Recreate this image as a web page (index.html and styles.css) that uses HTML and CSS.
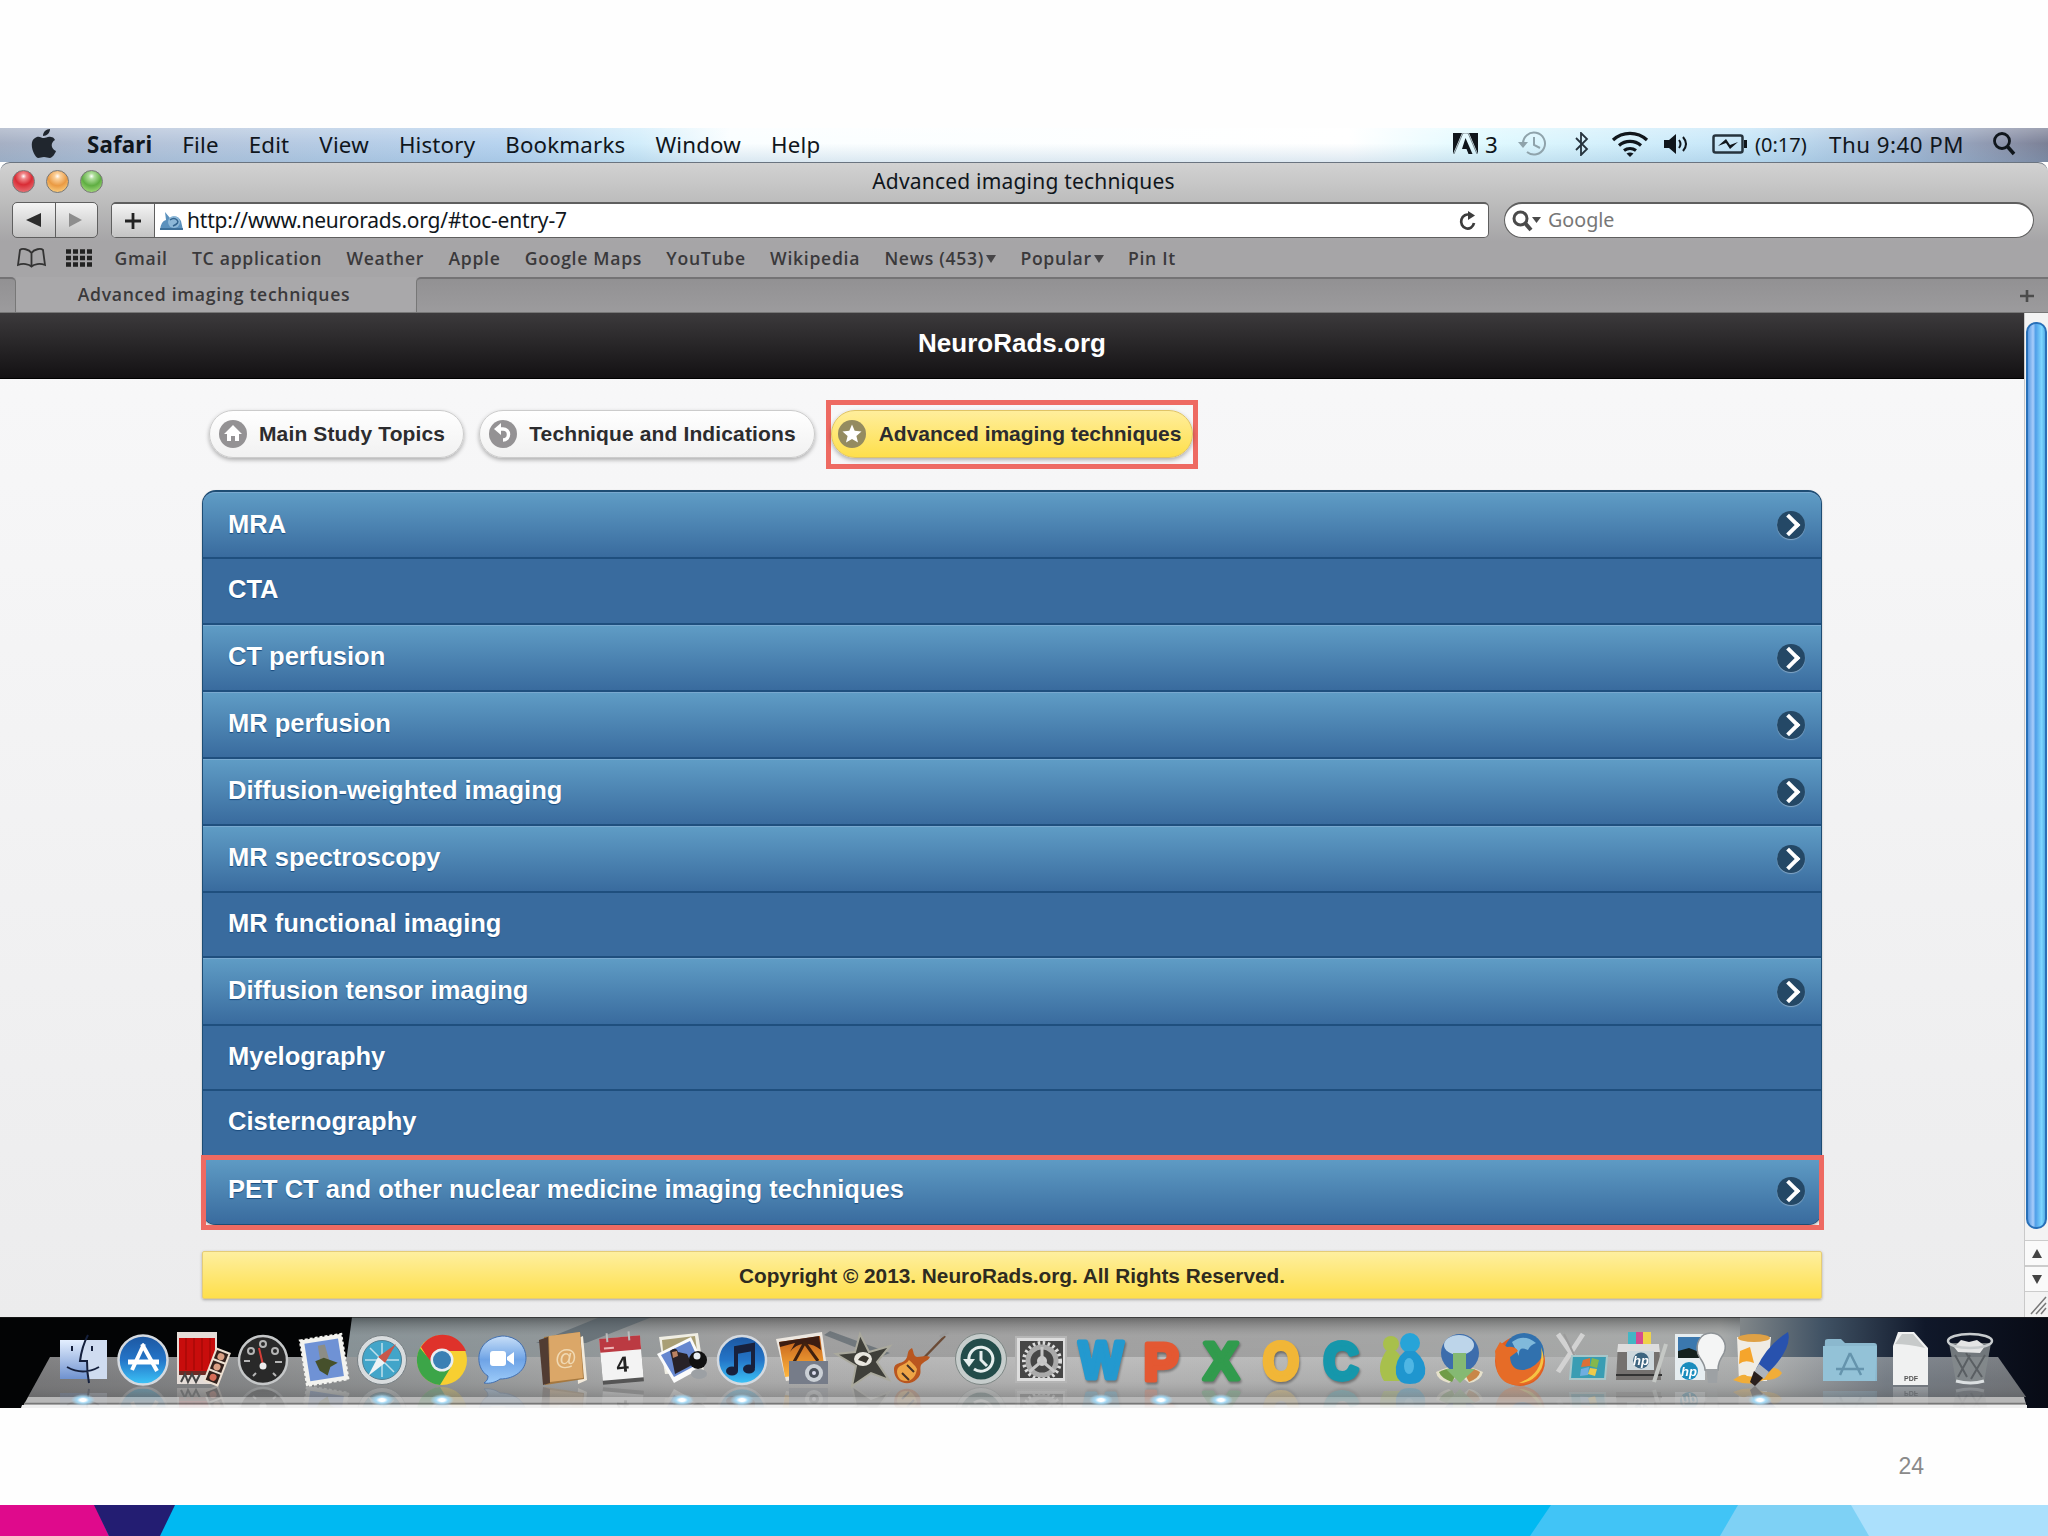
FILE: index.html
```html
<!DOCTYPE html>
<html lang="en">
<head>
<meta charset="utf-8">
<title>Advanced imaging techniques</title>
<link rel="stylesheet" href="styles.css">
</head>
<body>
<div class="slide">

<div class="desktop">
  <!-- Menu bar -->
  <div class="menubar">
    <svg class="apple" width="26" height="30" viewBox="0 0 26 30"><path d="M13 9c2 0 4-2 7-1 2 0 3 1 4 3-5 3-4 9 1 11-1 3-4 7-6 7-3 0-3-1-6-1s-3 1-6 1C3 28-3 13 4 9c4-3 6 0 9 0zM12 7c0-4 3-7 7-7 0 4-3 7-7 7z" fill="#20262e"/></svg>
    <div class="menus">
      <b>Safari</b><span>File</span><span>Edit</span><span>View</span><span>History</span><span>Bookmarks</span><span>Window</span><span>Help</span>
    </div>
    <div class="status">
      <svg width="26" height="22" viewBox="0 0 26 22"><path d="M0 0h9L0 21zM16 0h9v21zM12.500 5l7 16h-4l-2-5H9z" fill="#10161c"/><path d="M1 21L10 0h5l9 21" fill="none" stroke="#10161c" stroke-width=".5"/></svg>
      <span class="s-three">3</span>
      <svg class="s-tm" width="30" height="26" viewBox="0 0 30 26"><path d="M5 13a11 11 0 1 1 4 8M16 6v8l6 3" fill="none" stroke="#8fa3ab" stroke-width="2"/><path d="M0 11h10l-5 6z" fill="#8fa3ab"/></svg>
      <svg class="s-bt" width="14" height="24" viewBox="0 0 14 24"><path d="M1 6l11 11-6 6V1l6 6L1 18" fill="none" stroke="#26333d" stroke-width="1.800"/></svg>
      <svg class="s-wifi" width="38" height="26" viewBox="0 0 38 26"><g fill="none" stroke="#10161c" stroke-width="3.200"><path d="M2 9a25 25 0 0 1 34 0M8 14.500a17 17 0 0 1 22 0M13 19.500a10 10 0 0 1 12 0"/></g><path d="M15.500 22.500q3.500-2 7 0L19 26z" fill="#10161c"/></svg>
      <svg class="s-vol" width="25" height="20" viewBox="0 0 25 20"><path d="M0 6h5l7-6v20l-7-6H0z" fill="#10161c"/><path d="M15 6q3 4 0 8M19 3q6 7 0 14" fill="none" stroke="#10161c" stroke-width="2"/></svg>
      <svg class="s-bat" width="36" height="20" viewBox="0 0 36 20"><rect x="1.500" y="1.500" width="29" height="17" rx="2" fill="none" stroke="#26333d" stroke-width="2.500"/><path d="M32 6h3v8h-3zM6 12l8-7 4 6 8-3-8 7-4-6z" fill="#10161c"/></svg>
      <span class="s-left">(0:17)</span>
      <span class="s-clock">Thu 9:40 PM</span>
      <svg class="s-find" width="24" height="24" viewBox="0 0 24 24"><circle cx="10" cy="9" r="7.500" fill="none" stroke="#10161c" stroke-width="2.800"/><path d="M15 14l7 8" stroke="#10161c" stroke-width="3.500"/></svg>
    </div>
  </div>

  <!-- Safari window -->
  <div class="window">
    <div class="titlebar">
      <div class="lights"><i class="light red"></i><i class="light amber"></i><i class="light green"></i></div>
      <div class="title">Advanced imaging techniques</div>
    </div>
    <div class="toolbar">
      <div class="navbtns">
        <div><svg width="16" height="14" viewBox="0 0 16 14"><path d="M15 0v14L0 7z" fill="#2c2c2c"/></svg></div>
        <div><svg width="14" height="14" viewBox="0 0 14 14"><path d="M0 0v14l13-7z" fill="#8d8d8d"/></svg></div>
      </div>
      <div class="address">
        <div class="plus"><svg width="18" height="18" viewBox="0 0 18 18"><path d="M9 1v16M1 9h16" stroke="#222" stroke-width="2.800"/></svg></div>
        <svg class="favicon" width="25" height="20" viewBox="0 0 25 20"><path d="M1 19q1-9 6-10L6 1l5 6q7-4 11 3l2 9z" fill="#5b91bd"/><circle cx="15" cy="11" r="6" fill="#8db8d8"/><path d="M11 9q4-3 7 0t-4 6M1 18h23" fill="none" stroke="#34658f" stroke-width="1.500"/></svg>
        <span class="url">http://www.neurorads.org/#toc-entry-7</span>
        <svg class="reload" width="18" height="20" viewBox="0 0 18 20"><path d="M15 12a6.500 7 0 1 1-4-8" fill="none" stroke="#3c3c3c" stroke-width="2.700"/><path d="M9 0l7 4.500L9 9z" fill="#3c3c3c"/></svg>
      </div>
      <div class="search">
        <svg width="30" height="22" viewBox="0 0 30 22"><circle cx="8.500" cy="8.500" r="6.500" fill="none" stroke="#4a4a4a" stroke-width="3"/><path d="M13 13l6 7" stroke="#4a4a4a" stroke-width="4"/><path d="M20 7h9l-4.500 6z" fill="#4a4a4a"/></svg>
        <span>Google</span>
      </div>
    </div>
    <div class="bookmarks">
      <svg width="29" height="20" viewBox="0 0 29 20"><path d="M14.500 18V5C12 1 5 0 3 2L1 17c5-2 11-1 13.500 1.500C17 16 23 15 28 17L26 2c-2-2-9-1-11.500 3" fill="none" stroke="#333" stroke-width="1.800"/></svg>
      <svg class="grid-icon" width="26" height="18" viewBox="0 0 26 18"><path d="M0 2.500h26M0 9h26M0 15.500h26" stroke="#222" stroke-width="4.500" stroke-dasharray="5 2"/></svg>
      <span>Gmail</span><span>TC application</span><span>Weather</span><span>Apple</span><span>Google Maps</span><span>YouTube</span><span>Wikipedia</span><span>News (453)<i class="caret"></i></span><span>Popular<i class="caret"></i></span><span>Pin It</span>
    </div>
    <div class="tabbar">
      <div class="tab-edge"></div>
      <div class="tab">Advanced imaging techniques</div>
      <div class="tab-rest"><svg width="14" height="12" viewBox="0 0 14 12"><path d="M7 0v12M0 6h14" stroke="#4c4c4c" stroke-width="2.600"/></svg></div>
    </div>

    <div class="viewport">
      <div class="page">
        <div class="header">NeuroRads.org</div>
        <div class="content">
          <div class="crumbs">
            <div class="pill"><svg width="30" height="30" viewBox="0 0 30 30"><circle cx="15" cy="15" r="14" fill="#949294"/><path d="M15 6l9 9h-3v7h-4v-5h-4v5H9v-7H6z" fill="#fff"/></svg>Main Study Topics</div>
            <div class="pill"><svg width="30" height="30" viewBox="0 0 30 30"><circle cx="15" cy="15" r="14" fill="#949294"/><path d="M12 10h3a5 5 0 0 1 0 11" fill="none" stroke="#fff" stroke-width="3.500"/><path d="M13 4v12l-7-6z" fill="#fff"/></svg>Technique and Indications</div>
            <div class="marked"><div class="pill current"><svg width="30" height="30" viewBox="0 0 30 30"><circle cx="15" cy="15" r="14" fill="#948b60"/><path d="M15 5.500l2.700 6.300 6.800.600-5.100 4.500 1.600 6.700-6-3.600-6 3.600 1.600-6.700-5.100-4.500 6.800-.600z" fill="#fff"/></svg>Advanced imaging techniques</div></div>
          </div>

          <ul class="topics">
            <li class="link">MRA<i class="arrow"></i></li>
            <li>CTA</li>
            <li class="link">CT perfusion<i class="arrow"></i></li>
            <li class="link">MR perfusion<i class="arrow"></i></li>
            <li class="link">Diffusion-weighted imaging<i class="arrow"></i></li>
            <li class="link">MR spectroscopy<i class="arrow"></i></li>
            <li>MR functional imaging</li>
            <li class="link">Diffusion tensor imaging<i class="arrow"></i></li>
            <li>Myelography</li>
            <li>Cisternography</li>
            <li class="link boxed">PET CT and other nuclear medicine imaging techniques<i class="arrow"></i></li>
          </ul>

          <div class="footer">Copyright © 2013. NeuroRads.org. All Rights Reserved.</div>
        </div>
      </div>
      <div class="scrollbar">
        <div class="thumb"></div>
        <div class="step"><svg width="10" height="9" viewBox="0 0 10 9"><path d="M5 0l5 9H0z" fill="#444"/></svg></div>
        <div class="step"><svg width="10" height="9" viewBox="0 0 10 9"><path d="M5 9l5-9H0z" fill="#444"/></svg></div>
        <svg class="grip" width="23" height="24" viewBox="0 0 23 24"><path d="M6 22L21 5M11 22L21 11M16 22l5-6" stroke="#777" stroke-width="1.500"/></svg>
      </div>
    </div>
  </div>

  <!-- Dock -->
  <div class="dock">
    <svg class="shelf" width="2048" height="91" viewBox="0 0 2048 91">
      <defs>
        <linearGradient id="wall" x1="0" x2="1" y1="0" y2="0">
          <stop offset="0" stop-color="#050609"/><stop offset=".17" stop-color="#68757a"/><stop offset=".28" stop-color="#737b7e"/><stop offset=".36" stop-color="#858585"/><stop offset=".6" stop-color="#898989"/><stop offset=".84" stop-color="#909392"/><stop offset=".89" stop-color="#405264"/><stop offset=".94" stop-color="#10182a"/><stop offset="1" stop-color="#080b15"/>
        </linearGradient>
        <linearGradient id="fade" x1="0" x2="0" y1="0" y2="1"><stop offset="0" stop-color="#333" stop-opacity=".4"/><stop offset=".45" stop-color="#fff" stop-opacity=".22"/><stop offset="1" stop-color="#fff" stop-opacity=".2"/></linearGradient>
        <linearGradient id="glass" x1="0" x2="1" y1="0" y2="0"><stop offset="0" stop-color="#747476"/><stop offset=".2" stop-color="#929596"/><stop offset=".32" stop-color="#aaa"/><stop offset=".55" stop-color="#b6b6b6"/><stop offset=".87" stop-color="#a8aaaa"/><stop offset=".93" stop-color="#737b84"/><stop offset="1" stop-color="#6d7075"/></linearGradient>
        <linearGradient id="glassv" x1="0" x2="0" y1="0" y2="1"><stop offset="0" stop-color="#fff" stop-opacity=".1"/><stop offset=".6" stop-color="#888" stop-opacity=".1"/><stop offset="1" stop-color="#555" stop-opacity=".35"/></linearGradient>
      </defs>
      <path d="M0 0h2048v91H0z" fill="url(#wall)"/>
      <path d="M352 0h1388v42H340z" fill="url(#fade)"/>
      <path d="M0 0h352l-12 91H0z" fill="#030405"/>
      <path d="M600 0h52l-66 26h-50zM830 14l60 22-10 4-56-22z" fill="#41505a" opacity=".5"/>
      <path d="M50 40h1948l28 40H28z" fill="url(#glass)"/>
      <path d="M50 40h1948l28 40H28z" fill="url(#glassv)"/>
      <path d="M28 80h1996l3 11H22z" fill="#b7b7b7"/>
      <path d="M24 86.500h2002" stroke="#777" stroke-width="1.500"/>
      <path d="M22 88h2005v3H21z" fill="#efefef"/>
      <path d="M0 .500h2048" stroke="#222" opacity=".6"/>
    </svg>
    <ul class="icons">
      <li class="on"><svg viewBox="0 0 60 70"><defs><linearGradient id="fi" x1="0" x2="0" y1="0" y2="1"><stop offset="0" stop-color="#e4efff"/><stop offset="1" stop-color="#6f92cf"/></linearGradient></defs><path d="M7 23h47v39H7z" fill="#cfdcf0"/><path d="M7 23h27q-5 12-6 21h6q0 10 1 18H7z" fill="url(#fi)"/><path d="M35 18q-6 11-8 26h7q0 12 2 22M14 50q16 9 32 0M19 29v5M39 29v5" fill="none" stroke="#15203c" stroke-width="2"/></svg></li>
      <li><svg viewBox="0 0 60 70"><defs><linearGradient id="bl" x1="0" x2="0" y1="0" y2="1"><stop offset="0" stop-color="#1c56a0"/><stop offset=".5" stop-color="#2475c8"/><stop offset="1" stop-color="#3cc5f8"/></linearGradient></defs><circle cx="30" cy="43" r="24.500" fill="url(#bl)" stroke="#d5dae0" stroke-width="2.500"/><path d="M31 27L19 53M29 27l15 27" stroke="#fff" stroke-width="4"/><path d="M15 45h31" stroke="#fff" stroke-width="5"/></svg></li>
      <li><svg viewBox="0 0 60 70"><path d="M4 15h40v52H4z" fill="#e5ddd8"/><path d="M6 21h36v33H6z" fill="#c80d0c"/><path d="M13 21v32M21 21v32M29 21v32M37 21v32" stroke="#b00a08" stroke-width="2"/><path d="M6 54h36v4H6z" fill="#6d2a24"/><path d="M8 65l4-8 3 8 4-8 4 8 4-8" fill="none" stroke="#444" stroke-width="2"/><g transform="rotate(21 44 50)"><path d="M36 32h16v36H36z" fill="#ede0d2"/><path d="M38 34h12v9H38zM38 45h12v9H38zM38 56h12v10H38z" fill="#33211c"/><circle cx="44" cy="39" r="3.500" fill="#dba084"/><circle cx="44" cy="50" r="3.500" fill="#dba084"/><circle cx="44" cy="61" r="3.500" fill="#d86d58"/></g></svg></li>
      <li><svg viewBox="0 0 60 70"><circle cx="30" cy="43" r="24" fill="#292929" stroke="#c5c7c8" stroke-width="2.500"/><g fill="none" stroke="#b5b5b5" stroke-width="2"><circle cx="30" cy="27" r="3"/><circle cx="18" cy="34" r="3"/><circle cx="42" cy="34" r="3"/><path d="M11 44h6M42 45h7M20 59l3-3M40 56l3 3"/></g><path d="M30 48l-4-17" stroke="#d43e38" stroke-width="2"/><circle cx="30" cy="49" r="3.500" fill="#eee"/></svg></li>
      <li><svg viewBox="0 0 60 70"><g transform="rotate(-9 30 42)"><path d="M10 20h42v46H10z" fill="#f3f3ef" stroke="#f3f3ef" stroke-width="2" stroke-dasharray="3 2"/><path d="M14 24h34v38H14z" fill="#6f92d5"/><path d="M27 28h7l2 16h-9z" fill="#8c8d86"/><path d="M22 43l9-2 13 7-8 3-4 8-7-6z" fill="#46502b"/></g></svg></li>
      <li class="on"><svg viewBox="0 0 60 70"><circle cx="30" cy="43" r="22" fill="#42a5c9" stroke="#d8dcde" stroke-width="5"/><circle cx="30" cy="43" r="24.500" fill="none" stroke="#777f83"/><circle cx="30" cy="43" r="19.500" fill="none" stroke="#4f7f92"/><path d="M30 26v34M13 43h34M18 31l24 24" stroke="#bfe0ec" stroke-width="1.500"/><path d="M44 27L33 46l-7-6z" fill="#c8574a"/><path d="M16 59l10-19 7 6z" fill="#eef3f5"/></svg></li>
      <li class="on"><svg viewBox="0 0 60 70"><circle cx="30" cy="43" r="25" fill="#f7cf31"/><path d="M9 30a25 25 0 0 1 43 0l2 4H30L20 48z" fill="#df322b"/><path d="M8 31a25 25 0 0 0 20 37l11-18-17-2z" fill="#3ca548"/><circle cx="30" cy="43" r="11.500" fill="#e9eef2"/><circle cx="30" cy="43" r="9" fill="#3a80b4"/></svg></li>
      <li><svg viewBox="0 0 60 70"><defs><linearGradient id="chat" x1="0" x2="0" y1="0" y2="1"><stop offset="0" stop-color="#c8dff8"/><stop offset=".5" stop-color="#6ea3e6"/><stop offset="1" stop-color="#9dccfa"/></linearGradient></defs><path d="M30 19c15 0 24 10 24 22S43 62 28 62c-4 3-10 5-16 4 3-2 4-4 4-7C2 51 2 22 30 19z" fill="url(#chat)" stroke="#426faf"/><rect x="18" y="34" width="16" height="15" rx="3" fill="#fff"/><path d="M35 40l7-5v13l-7-5z" fill="#fff"/></svg></li>
      <li><svg viewBox="0 0 60 70"><path d="M51 19l4 44-9 4-2-45z" fill="#f2eadb"/><path d="M12 20l36-5 4 47-39 6z" fill="#a5783f"/><path d="M17 19l31-4 3 46-33 4z" fill="#dba768"/><path d="M7 23l9-3 2 46-7 2z" fill="#513c32"/><text class="t-at" x="34" y="48">@</text></svg></li>
      <li><svg viewBox="0 0 60 70"><g transform="rotate(-5 30 43)"><path d="M9 20h41v46H9z" fill="#555"/><path d="M9 20h41v42H9z" fill="#f3f3f3"/><path d="M9 20h41v14H9z" fill="#bb3a42"/><path d="M17 15v9M39 15v9" stroke="#bbb" stroke-width="2"/><text class="t-day" x="30" y="55">4</text><path d="M13 30h10" stroke="#edb7b7" stroke-width="2"/></g></svg></li>
      <li class="on"><svg viewBox="0 0 60 70"><path d="M7 20l39-4 6 39-39 2z" fill="#f0eee4"/><path d="M10 23l33-4 3 22-34 4z" fill="#a99f75"/><path d="M5 37l34-17 14 29-31 17z" fill="#fbfbfb"/><path d="M9 38l29-14 10 22-26 14z" fill="#6687cf"/><path d="M18 34q6-5 8 1l9 2 5 11-17 9-3-15z" fill="#282228"/><path d="M20 35l5-1 1 5-5 2z" fill="#bb8262"/><circle cx="46" cy="43" r="9" fill="#111"/><circle cx="45" cy="39" r="3.500" fill="#e7edf2"/><ellipse cx="47" cy="57" rx="8" ry="5" fill="#9ca0a4"/></svg></li>
      <li class="on"><svg viewBox="0 0 60 70"><circle cx="30" cy="43" r="24" fill="url(#bl)" stroke="#d5dae0" stroke-width="2.500"/><path d="M24 54V31l17-3v23M24 35l17-3" fill="none" stroke="#18213d" stroke-width="4"/><ellipse cx="20" cy="54" rx="6" ry="4.500" fill="#18213d"/><ellipse cx="37" cy="52" rx="6" ry="4.500" fill="#18213d"/></svg></li>
      <li><svg viewBox="0 0 60 70"><defs><linearGradient id="sun" x1="0" x2="0" y1="0" y2="1"><stop offset="0" stop-color="#c15b19"/><stop offset="1" stop-color="#ffb63d"/></linearGradient></defs><path d="M4 22l46-7 6 43-42 6z" fill="#ece7e0"/><path d="M7 25l41-6 5 36-40 5z" fill="url(#sun)"/><path d="M7 25l40-6 2 14q-8-7-17-6-8 0-14 8l5-9-15 4z" fill="#3c1d12"/><path d="M33 25L22 45M33 26l13 18" stroke="#40210f" stroke-width="3"/><path d="M17 44h39v23H17z" fill="#767c89"/><circle cx="42" cy="56" r="9" fill="#cbd0d6"/><circle cx="42" cy="56" r="5" fill="#4a505a"/><circle cx="42" cy="56" r="2" fill="#dde"/></svg></li>
      <li><svg viewBox="0 0 60 70"><path d="M28 17l9 18 21-6-13 16 12 18-18-7-19 13 4-20L4 37l19-2z" fill="#3f3f39" stroke="#aaa99d" stroke-width="2"/><ellipse cx="31" cy="42" rx="9" ry="7" fill="#e9e7df"/><path d="M26 43q5-8 11-2l-3 5q-4-2-8-3z" fill="#38352d"/></svg></li>
      <li><svg viewBox="0 0 60 70"><path d="M26 48L54 19" stroke="#6b4b36" stroke-width="2.500"/><path d="M49 20l8-5" stroke="#999" stroke-width="3"/><path d="M3 53c0-9 8-5 12-11 3-4 0-8 6-11 2 4 1 8 5 9 5 0 9-2 13 0-2 4-6 4-9 8-2 5 2 8-4 14-9 9-23 3-23-9z" fill="#b9561f"/><path d="M6 54c1-7 8-5 12-11 3 3 6 5 8 9-1 6-4 12-11 12-6 0-9-4-9-10z" fill="#eda546"/><path d="M16 48l7 7M11 56l7 7" stroke="#453125" stroke-width="2"/></svg></li>
      <li><svg viewBox="0 0 60 70"><circle cx="30" cy="42" r="23" fill="#234c4a" stroke="#c6cdcc" stroke-width="5"/><circle cx="30" cy="42" r="25.500" fill="none" stroke="#7c8583"/><path d="M18 44a12 12 0 1 1 5 8M30 34v9l6 6" fill="none" stroke="#e6efee" stroke-width="3"/><path d="M12 42h12l-6 8z" fill="#e6efee"/></svg></li>
      <li><svg viewBox="0 0 60 70"><path d="M5 20h50v45H5z" fill="#ddd"/><path d="M9 24h43v37H9z" fill="#464646"/><circle cx="31" cy="44" r="18" fill="none" stroke="#ddd" stroke-width="4" stroke-dasharray="2.500 2.500"/><circle cx="31" cy="44" r="14" fill="none" stroke="#aaa" stroke-width="5"/><circle cx="31" cy="44" r="5" fill="#ccc"/><path d="M31 44V30M31 44L18 55M31 44l13 11" stroke="#c6c6c6" stroke-width="3"/><path d="M5 20h50v45H5z" fill="none" stroke="#b5b5b5" stroke-width="2"/></svg></li>
      <li class="on"><svg viewBox="0 0 60 70"><text class="letter w" x="30" y="61" textLength="44" lengthAdjust="spacingAndGlyphs">W</text></svg></li>
      <li class="on"><svg viewBox="0 0 60 70"><text class="letter p" x="30" y="63">P</text></svg></li>
      <li class="on"><svg viewBox="0 0 60 70"><text class="letter x" x="30" y="62">X</text></svg></li>
      <li><svg viewBox="0 0 60 70"><text class="letter o" x="30" y="62" textLength="36" lengthAdjust="spacingAndGlyphs">O</text></svg></li>
      <li><svg viewBox="0 0 60 70"><text class="letter c" x="30" y="62" textLength="35" lengthAdjust="spacingAndGlyphs">C</text></svg></li>
      <li><svg viewBox="0 0 60 70"><circle cx="20" cy="27" r="8" fill="#a8c04c"/><path d="M15 34h10q11 9 6 30H13q-9-13 2-30z" fill="#a8c04c"/><circle cx="39" cy="26" r="10" fill="#27a4d8"/><path d="M34 34h10q12 10 10 23-3 10-15 10T25 57q-2-14 9-23z" fill="#1f96cf"/><ellipse cx="38" cy="49" rx="5" ry="8" fill="#4fb6e4"/></svg></li>
      <li><svg viewBox="0 0 60 70"><path d="M6 55q23-12 47 0-2 9-14 11L29 58l-10 8Q7 63 6 55z" fill="#e6e1cb"/><path d="M9 55q12-6 20-3l-7 13q-11-4-13-10z" fill="#709c47"/><path d="M50 55q-10-6-18-3l7 13q10-4 11-10z" fill="#c88747"/><circle cx="30" cy="36" r="19" fill="#3d6dac"/><ellipse cx="29" cy="28" rx="15" ry="10" fill="#bdd5ea"/><path d="M23 36h13v16h9L30 66 16 52h7z" fill="#85b973"/></svg></li>
      <li><svg viewBox="0 0 60 70"><circle cx="30" cy="44" r="25" fill="#e15e21"/><circle cx="34" cy="36" r="20" fill="#3171ae"/><path d="M22 25q12-9 24 1-6 2-8 7-10-5-9 6z" fill="#80b9db"/><path d="M5 34l5-9 7 5q8-1 11 4l-8 6q1 14 14 13 12-2 19-15 2 21-14 28Q14 73 7 54z" fill="#e66c27"/><path d="M51 30q7 17-5 29-7 7-17 7 26-10 22-36z" fill="#f6c343"/></svg></li>
      <li><svg viewBox="0 0 60 70"><path d="M8 17l25 36M33 17L8 55" stroke="#d2d2d2" stroke-width="5"/><path d="M14 17l17 35" stroke="#9b9b9b" stroke-width="2"/><path d="M22 39h35l-2 23H20z" fill="#399db3"/><path d="M22 39h35l-2 23H20z" fill="none" stroke="#a8c7ca" stroke-width="2"/><path d="M33 43l7-2v8l-9 1z" fill="#dd7036"/><path d="M42 41l7 2-2 8-7-2z" fill="#85b84b"/><path d="M31 52l8-2-1 8-8 1z" fill="#6faee0"/><path d="M40 51l7 1-2 7-7-2z" fill="#edca4b"/></svg></li>
      <li><svg viewBox="0 0 60 70"><path d="M18 15h23v13H18z" fill="#efd34b"/><path d="M18 15h8v13h-8z" fill="#43b6c5"/><path d="M26 15h7v13h-7z" fill="#d54c91"/><path d="M8 27h41l2 36H6z" fill="#74716f"/><path d="M8 27h41l1 8H7z" fill="#ddd"/><rect x="17" y="34" width="27" height="19" fill="#ced8dd"/><circle cx="31" cy="43.500" r="8" fill="#3d6580"/><text class="t-hp" x="31" y="48">hp</text><path d="M6 58h46" stroke="#333" stroke-width="2"/><path d="M56 27L44 65" stroke="#c5c8c5" stroke-width="4"/></svg></li>
      <li><svg viewBox="0 0 60 70"><path d="M5 17h30v46H5z" fill="#e6edf0"/><path d="M8 20h24v21H8z" fill="#3b78ae"/><path d="M8 34l11-3 13 5v5H8z" fill="#14211f"/><circle cx="19" cy="54" r="9" fill="#198cbd"/><text class="t-hp" x="19" y="59">hp</text><path d="M41 16c11 0 17 11 13 20-4 7-6 10-6 17H35c0-7-4-9-7-16-3-10 2-21 13-21z" fill="#f4f5f5" stroke="#8d9296" stroke-width="1.500"/><path d="M36 52h12l-1 14h-9z" fill="#9da1a4"/></svg></li>
      <li class="on"><svg viewBox="0 0 60 70"><path d="M7 20h34l-4 44H9z" fill="#f0ece4"/><ellipse cx="24" cy="21" rx="16" ry="4" fill="#dfa145"/><path d="M10 34l10-4 4 16q-9-4-15 1z" fill="#f5a52c"/><path d="M3 63q11-8 14-4 14 2 16-3 12-10 19 0-4 7-18 7-15 7-31 0z" fill="#f1ad38"/><path d="M58 15q5 17-22 43l-10-6Q37 28 58 15z" fill="#2852ae"/><path d="M29 47l10 8-5 7-10-7z" fill="#aeb4bc"/><path d="M24 54l9 7-8 8-5-4z" fill="#291f1d"/></svg></li>
      <li class="spaced"><svg viewBox="0 0 60 70"><path d="M5 24q0-2 3-2h13l4 4h29q3 0 3 3v35H3z" fill="#8bb8ce"/><path d="M3 29h54l-2 35H3z" fill="#93c2d7"/><path d="M30 36L20 58M30 36l11 22M16 52h28" fill="none" stroke="#6594ad" stroke-width="2.500"/></svg></li>
      <li><svg viewBox="0 0 60 70"><path d="M13 29l5-14h16l14 16v37H13z" fill="#f0f1f1"/><path d="M15 27l7-10h11l12 14q-17-4-30-4z" fill="#c7caca"/><text class="t-pdf" x="31" y="64">PDF</text></svg></li>
      <li><svg viewBox="0 0 60 70"><path d="M9 26l7 39q14 4 28 0l7-39z" fill="#84898c" fill-opacity=".85"/><path d="M15 38l12 22M26 36l16 24M18 60l12-22M31 62l14-24" stroke="#5a5f63" stroke-width="2"/><path d="M14 30l7-7 8 2 8-2 8 6-5 7-22-1z" fill="#e4e5e5"/><ellipse cx="30" cy="24" rx="22" ry="7" fill="none" stroke="#c7cbcd" stroke-width="2.500"/><path d="M16 64q15 4 28 0" fill="none" stroke="#dce0e2" stroke-width="3"/></svg></li>
    </ul>
  </div>
</div>

<div class="slide-no">24</div>
<svg class="stripe" width="2048" height="31" viewBox="0 0 2048 31">
  <path d="M0 0h2048v31H0z" fill="#00b9f2"/>
  <path d="M0 0h95l14 31H0z" fill="#df0a8c"/>
  <path d="M94 0h81l-15 31h-51z" fill="#231d72"/>
  <path d="M1551 0h497v31h-518z" fill="#41c4f6"/>
  <path d="M1738 0h310v31h-328z" fill="#7ed1f5"/>
  <path d="M1851 0h197v31h-179z" fill="#abe0fc"/>
</svg>
</div>
</body>
</html>
```
FILE: styles.css
```css
* {
    box-sizing: border-box;
}

body {
    margin: 0;
    background: #fefefe;
    font-family: "Noto Sans", "Open Sans", sans-serif;
    color: #10161c;
}

svg {
    display: block;
    flex: none;
}

ul {
    list-style: none;
    margin: 0;
    padding: 0;
}

.slide {
    width: 2048px;
    height: 1536px;
    padding-top: 128px;
    display: flex;
    flex-direction: column;
    overflow: hidden;
}

.desktop {
    height: 1280px;
    flex: none;
}

/* menu bar */
.menubar {
    height: 34px;
    display: flex;
    align-items: center;
    padding: 0 0 2px 31px;
    font-size: 22.3px;
    white-space: nowrap;
    background: linear-gradient(rgba(255,255,255,.25), rgba(255,255,255,0) 45%, rgba(120,165,200,.25)),
        linear-gradient(90deg, #a6b0c4 0, #b5c4da 160px, #b7d3ef 500px, #d2edfb 640px, #fafeff 730px, #fff 1350px, #e1faff 1480px, #c5e5f8 1750px, #a6bbd6 1900px, #8a91a8 2010px, #7b8096 2048px);
}

.menus {
    display: flex;
    gap: 30px;
    margin-left: 30px;
    letter-spacing: .18px;
}

.status {
    display: flex;
    align-items: center;
    margin-left: auto;
    padding-right: 32px;
}

.s-three { margin-left: 6px; width: 16px; }
.s-tm { margin-left: 17px; }
.s-bt { margin-left: 27px; }
.s-wifi { margin-left: 22px; }
.s-vol { margin-left: 15px; }
.s-bat { margin-left: 23px; }
.s-left { margin-left: 7px; width: 56px; font-size: 20px; }
.s-clock { margin-left: 18px; width: 138px; letter-spacing: .5px; }
.s-find { margin-left: 25px; }

/* browser window */
.window {
    height: 1155px;
    border-top: 1px solid #6a7480;
    border-radius: 10px 10px 0 0;
    background: linear-gradient(#d2d2d2, #bcbcbc 40px, #a6a5a7 78px, #a6a5a7 114px);
}

.titlebar {
    height: 39px;
    display: flex;
    align-items: center;
    padding: 0 0 3px 12px;
}

.lights {
    display: flex;
    gap: 11px;
    width: 200px;
}

.light {
    width: 23px;
    height: 23px;
    border-radius: 50%;
    border: 1px solid #777;
}

.red { background: radial-gradient(circle at 50% 25%, #fff 0, #f0888a 15%, #d92c35 45%, #e9787c 90%); }
.amber { background: radial-gradient(circle at 50% 25%, #fff 0, #fbd09a 15%, #ea9a43 50%, #fbd385 90%); }
.green { background: radial-gradient(circle at 50% 25%, #fff 0, #b0de9c 15%, #5fae42 50%, #aade82 90%); }

.title {
    flex: 1;
    text-align: center;
    padding-right: 213px;
    font-size: 21px;
    letter-spacing: .2px;
}

.toolbar {
    height: 36px;
    display: flex;
    padding-left: 12px;
}

.navbtns {
    display: flex;
    width: 86px;
    border: 1px solid #5f5f5f;
    border-radius: 5px;
    background: linear-gradient(#f4f4f4, #c2c2c2);
}

.navbtns div {
    flex: 1;
    display: flex;
    align-items: center;
    justify-content: center;
}

.navbtns div + div {
    border-left: 1px solid #5f5f5f;
}

.address {
    display: flex;
    align-items: center;
    margin-left: 13px;
    width: 1378px;
    border: 1px solid #5f5f5f;
    border-top-width: 2px;
    border-radius: 5px;
    background: #fff;
    overflow: hidden;
    font-size: 21px;
}

.plus {
    width: 43px;
    height: 34px;
    display: flex;
    align-items: center;
    justify-content: center;
    border-right: 1px solid #5f5f5f;
    background: linear-gradient(#f4f4f4, #c2c2c2);
}

.favicon { margin-left: 4px; }

.url {
    margin-left: 3px;
    padding-bottom: 2px;
    letter-spacing: -.2px;
}

.reload { margin-left: auto; margin-right: 11px; }

.search {
    display: flex;
    align-items: center;
    margin-left: 15px;
    width: 530px;
    padding-left: 7px;
    border: 1px solid #5f5f5f;
    border-top-width: 2px;
    border-radius: 18px;
    background: #fff;
    color: #777;
    font-size: 19.7px;
}

.search span { margin-left: 6px; padding-bottom: 2px; }

.bookmarks {
    height: 39px;
    display: flex;
    align-items: center;
    gap: 24.3px;
    padding-left: 17px;
    font: 600 17.6px "Open Sans", "Noto Sans", sans-serif;
    letter-spacing: .7px;
    color: #3a393b;
    white-space: nowrap;
}

.grid-icon {
    margin-left: -4px;
    margin-right: -2px;
}

.caret {
    display: inline-block;
    margin: 0 0 2px 2px;
    border: 5px solid transparent;
    border-top: 8px solid #464547;
    border-bottom: 0;
}

.tabbar {
    height: 36px;
    display: flex;
    border-bottom: 1px solid #777;
}

.tab-edge,
.tab-rest {
    border-top: 2px solid #747375;
    background: linear-gradient(#929193, #9c9b9d);
}

.tab-edge {
    width: 16px;
    border-right: 1px solid #777;
    border-top-right-radius: 5px;
}

.tab {
    width: 400px;
    background: #a9a8aa;
    border-radius: 0 0 6px 6px;
    padding-right: 4px;
    text-align: center;
    font: 600 17.6px/34px "Open Sans", "Noto Sans", sans-serif;
    letter-spacing: .7px;
    color: #3a393b;
}

.tab-rest {
    flex: 1;
    display: flex;
    align-items: center;
    justify-content: flex-end;
    padding-right: 14px;
    border-left: 1px solid #777;
    border-top-left-radius: 5px;
}

/* page */
.viewport {
    height: 1004px;
    display: flex;
}

.page {
    width: 2024px;
    background: linear-gradient(#f8f8f9, #ececed);
    font-family: "Liberation Sans", Arial, sans-serif;
    font-weight: bold;
}

.header {
    height: 66px;
    line-height: 60px;
    text-align: center;
    font-size: 26px;
    color: #fff;
    background: linear-gradient(#3c3a3c, #131113);
    border-bottom: 1px solid #000;
}

.content {
    width: 1620px;
    margin: 0 auto;
}

.crumbs {
    display: flex;
    padding: 21px 0 0 7px;
    height: 111px;
    align-items: flex-start;
}

.pill {
    display: flex;
    align-items: center;
    height: 48px;
    margin: 10px 15px 0 0;
    padding: 0 18px 0 8px;
    border: 1px solid #ccc;
    border-radius: 24px;
    font-size: 21px;
    letter-spacing: .13px;
    color: #2c2c2e;
    background: linear-gradient(#fff, #f1f1f1);
    box-shadow: 0 2px 4px rgba(0,0,0,.3);
    white-space: nowrap;
}

.pill svg { margin-right: 11px; }

.marked {
    width: 372px;
    height: 69px;
    border: 5px solid #ee6a62;
    margin-left: -4px;
}

.marked .pill {
    margin: 5px 0 0 0;
    padding-left: 5px;
    padding-right: 9px;
    letter-spacing: -.03px;
}

.marked .pill svg { margin-right: 12px; }

.current {
    background: linear-gradient(#ffee9c, #fedf4b);
    border-color: #e0c466;
}

.topics {
    border: 1px solid #1e4d74;
    border-top-width: 2px;
    border-radius: 14px;
    background: #396b9e;
    box-shadow: 0 1px 2px rgba(0,0,0,.3);
}

.topics li {
    height: 65.5px;
    display: flex;
    align-items: center;
    justify-content: space-between;
    padding: 0 16px 2px 25px;
    font-size: 25.5px;
    color: #fff;
    text-shadow: 0 1px 1px #194b7e;
    border-bottom: 2px solid #1f4f7e;
}

.topics .link {
    height: 67.1px;
    border-top: 1px solid #79a9d0;
    background: linear-gradient(#5f9cc5, #396b9e);
}

.topics li:first-child { border-radius: 12px 12px 0 0; }
.topics li:last-child { border-radius: 0 0 12px 12px; }

.arrow {
    width: 28px;
    height: 28px;
    margin-top: 2px;
    border-radius: 50%;
    background: #244866;
    box-shadow: 0 1px 1px rgba(255,255,255,.35);
    display: flex;
    align-items: center;
    justify-content: center;
}

.arrow::after {
    content: "";
    width: 12px;
    height: 12px;
    margin-left: -5px;
    border: solid #fff;
    border-width: 4.5px 4.5px 0 0;
    transform: rotate(45deg);
}

.topics .boxed {
    position: relative;
    border-bottom: 0;
}

/* highlight frame lies over the row edges */
.boxed::after {
    content: "";
    position: absolute;
    left: -2px;
    right: -3px;
    top: -3px;
    bottom: -6px;
    border: 5px solid #ee6a62;
}

.footer {
    height: 48px;
    margin-top: 26px;
    line-height: 47px;
    text-align: center;
    font-size: 20.8px;
    color: #2e2b20;
    border: 1px solid #e5cc77;
    border-radius: 2px;
    background: linear-gradient(#feef9f, #fedf4b);
    box-shadow: 0 1px 3px rgba(0,0,0,.3);
}

.scrollbar {
    width: 24px;
    background: #f3f3f3;
    border-left: 1px solid #c9c9c9;
    padding-top: 9px;
}

.thumb {
    height: 907px;
    margin: 0 1px 11px 1px;
    border: 2px solid #2870b8;
    border-radius: 10px;
    background: linear-gradient(90deg, #5a9ce4, #a8cdfa 30%, #4f9fe8 45%, #7cd6ff 80%, #56aee6);
}

.step {
    height: 26px;
    border: 1px solid #ccc;
    border-width: 1px 0;
    display: flex;
    align-items: center;
    justify-content: center;
    background: #fafafa;
}

/* dock */
.dock {
    height: 91px;
    position: relative;
    overflow: hidden;
}

.icons {
    position: absolute;
    left: 53px;
    top: 0;
    display: flex;
}

.icons li {
    width: 59.9px;
    height: 91px;
}

.icons svg {
    width: 60px;
    height: 70px;
    overflow: visible;
    -webkit-box-reflect: below -2px linear-gradient(transparent 65%, rgba(0,0,0,.3));
}

.icons .spaced {
    margin-left: 30px;
}

.icons .on::after {
    content: "";
    display: block;
    position: relative;
    width: 24px;
    height: 12px;
    margin: 7px auto 0;
    background: radial-gradient(closest-side, #fff 25%, #a5daf6 50%, transparent);
}

.letter {
    font: bold 52px "Liberation Sans", Arial, sans-serif;
    text-anchor: middle;
    stroke-width: 5px;
    stroke-linejoin: round;
    filter: drop-shadow(1px 2px 1px rgba(0,0,0,.35));
}

.w { fill: #2399cf; stroke: #2399cf; }
.p { fill: #e45832; stroke: #e45832; }
.x { fill: #319b4d; stroke: #319b4d; }
.o { fill: #f1b637; stroke: #f1b637; }
.c { fill: #1697ab; stroke: #1697ab; }

.t-at {
    font: 22px "Liberation Sans", sans-serif;
    fill: #f0d9b3;
    text-anchor: middle;
}

.t-day {
    font: bold 22px "Liberation Sans", sans-serif;
    fill: #222;
    text-anchor: middle;
}

.t-hp {
    font: italic bold 13px "Liberation Sans", sans-serif;
    fill: #fff;
    text-anchor: middle;
}

.t-pdf {
    font: bold 7px "Liberation Sans", sans-serif;
    fill: #555;
    text-anchor: middle;
}

/* slide footer */
.slide-no {
    height: 97px;
    padding: 45px 124px 0 0;
    text-align: right;
    font: 23px/27px "Liberation Sans", Arial, sans-serif;
    color: #8a8a8a;
}
```
